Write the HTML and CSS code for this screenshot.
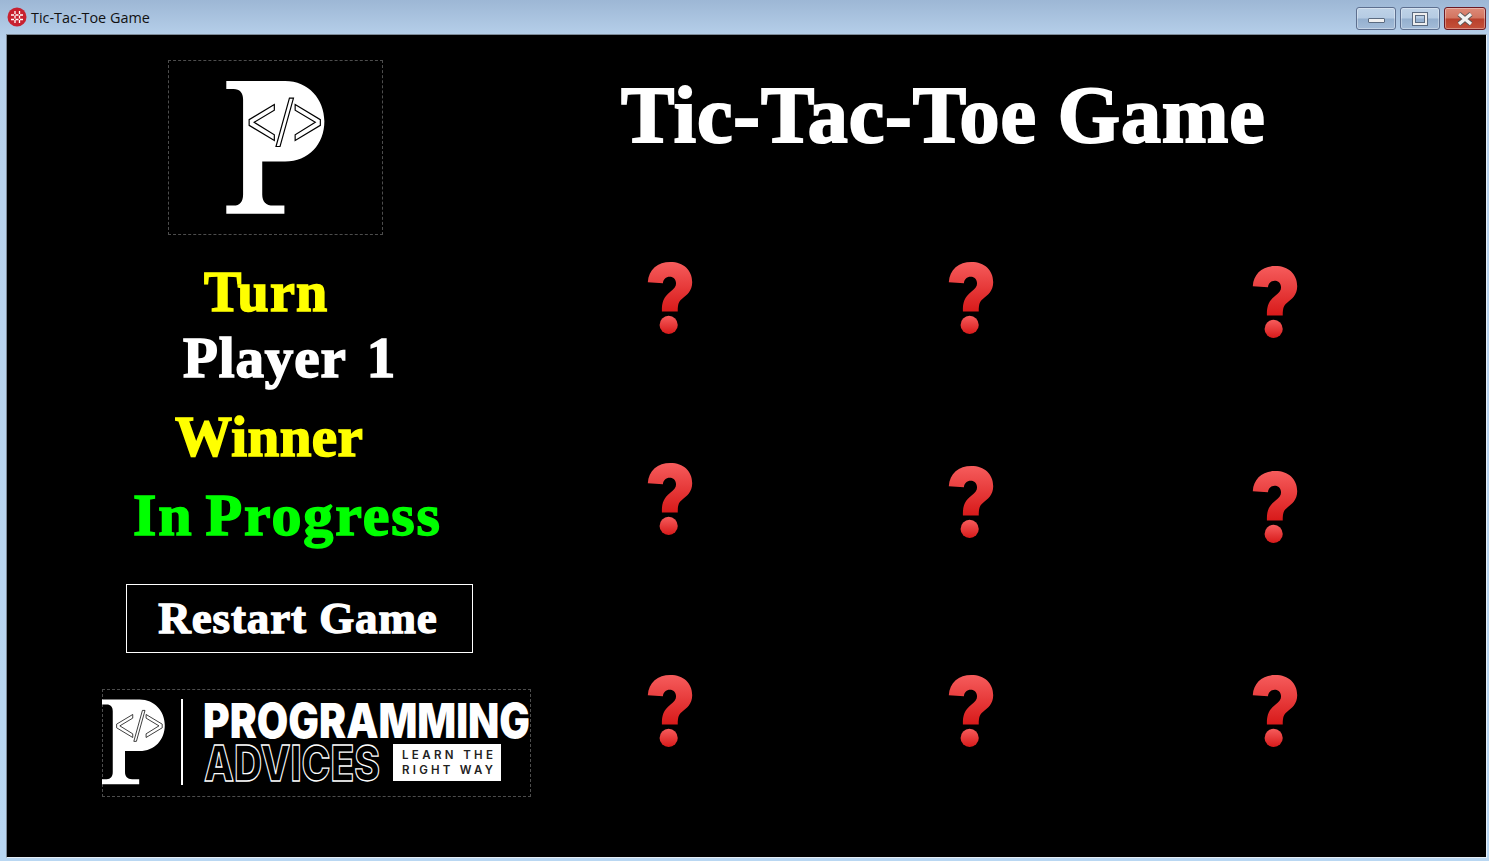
FILE: index.html
```html
<!DOCTYPE html>
<html lang="en">
<head>
  <meta charset="UTF-8">
  <title>Tic-Tac-Toe Game</title>
  <link rel="stylesheet" href="styles.css">
</head>
<body>

  <svg class="defs" width="0" height="0">
    <defs>
      <linearGradient id="qGrad" x1="0" y1="0" x2="0" y2="1">
        <stop offset="0" stop-color="#f65c5c"/>
        <stop offset="1" stop-color="#d81a1a"/>
      </linearGradient>
      <symbol id="question" viewBox="40 38 132 214">
        <path fill="url(#qGrad)" d="M40 98C42 60 70 38 107 38C146 38 172 62 172 98C172 124 156 136 142 147C132 155 129 162 129 185L82 185C81 158 87 142 106 127C118 118 124 112 124 102C124 90 116 82 105 82C94 82 86 90 85 101Z"/>
        <circle cx="102" cy="225" r="27" fill="url(#qGrad)"/>
      </symbol>
      <symbol id="pmark" viewBox="200 80 293 396">
        <path fill="#fff" d="M200 80H375C445 80 492 135 492 200C492 268 445 320 375 320H307V418C307 440 318 451 340 451H373V475H200V451H222C240 451 250 440 250 418V135C250 115 240 104 222 104H200Z"/>
        <g fill="#fff" stroke="#000" stroke-width="3.5">
          <path d="M343 150L268 195V212L343 257V240L283 203L343 167Z"/>
          <path d="M388 131H400L360 275H348Z"/>
          <path d="M405 150L480 195V212L405 257V240L465 203L405 167Z"/>
        </g>
      </symbol>
    </defs>
  </svg>

  <div class="window">
    <div class="titlebar">
      <svg class="app-icon" viewBox="0 0 20 20">
        <circle cx="10" cy="10" r="9.5" fill="#c8202f"/>
        <path d="M8 4V16M12.5 4V16M4 8H16M4 12.5H16" stroke="#fff" stroke-width="1.3" stroke-dasharray="3 1.5" fill="none"/>
      </svg>
      <span class="app-title">Tic-Tac-Toe Game</span>
      <div class="controls">
        <div class="ctl"><span class="ico-min"></span></div>
        <div class="ctl"><span class="ico-max"></span></div>
        <div class="ctl ctl-close">
          <svg viewBox="0 0 18 14" width="18" height="14">
            <path d="M3 2L15 12M15 2L3 12" stroke="#555" stroke-width="5"/>
            <path d="M3 2L15 12M15 2L3 12" stroke="#f2f2f2" stroke-width="3.4"/>
          </svg>
        </div>
      </div>
    </div>

    <div class="client">
      <div class="side">
        <div class="logo-box">
          <svg width="99" height="133"><use href="#pmark"/></svg>
        </div>
        <div class="lbl turn">Turn</div>
        <div class="lbl player">Player 1</div>
        <div class="lbl winner">Winner</div>
        <div class="lbl progress">In Progress</div>
        <button class="restart">Restart Game</button>
        <div class="brand">
          <svg width="427" height="106" viewBox="1 1 427 106">
            <use href="#pmark" x="0" y="10" width="63" height="86"/>
            <rect x="79" y="10" width="2" height="86" fill="#fff"/>
            <text class="w-prog" x="101" y="49" textLength="327" lengthAdjust="spacingAndGlyphs">PROGRAMMING</text>
            <text class="w-adv" x="102" y="92" textLength="176" lengthAdjust="spacingAndGlyphs">ADVICES</text>
            <rect x="291" y="55" width="108" height="37" fill="#fff"/>
            <text class="w-tag" x="300" y="70" textLength="91">LEARN THE</text>
            <text class="w-tag" x="300" y="85" textLength="91">RIGHT WAY</text>
          </svg>
        </div>
      </div>

      <div class="stage">
        <h1 class="heading">Tic-Tac-Toe Game</h1>
        <div class="board">
          <div class="cell"><svg class="q"><use href="#question"/></svg></div>
          <div class="cell"><svg class="q"><use href="#question"/></svg></div>
          <div class="cell drop-4"><svg class="q"><use href="#question"/></svg></div>
          <div class="cell"><svg class="q"><use href="#question"/></svg></div>
          <div class="cell drop-3"><svg class="q"><use href="#question"/></svg></div>
          <div class="cell drop-8"><svg class="q"><use href="#question"/></svg></div>
          <div class="cell"><svg class="q"><use href="#question"/></svg></div>
          <div class="cell"><svg class="q"><use href="#question"/></svg></div>
          <div class="cell"><svg class="q"><use href="#question"/></svg></div>
        </div>
      </div>
    </div>
  </div>

</body>
</html>
```

FILE: styles.css
```css
html, body {
  margin: 0;
  height: 100%;
  overflow: hidden;
}

.defs {
  display: block;
  height: 0;
}

.window {
  height: 861px;
  box-sizing: border-box;
  display: flex;
  flex-direction: column;
  background: linear-gradient(#9db7d5 0, #b9d2ec 40px, #b9d7f2 100%);
  padding: 0 2px 3px 6px;
}

.titlebar {
  height: 34px;
  flex: none;
  display: flex;
  align-items: center;
  margin-left: -6px;
  padding-left: 7px;
}

.app-icon {
  width: 20px;
  height: 20px;
  margin-right: 4px;
}

.app-title {
  font-family: "Open Sans", sans-serif;
  font-size: 14.4px;
  color: #111;
}

.controls {
  margin-left: auto;
  display: flex;
  gap: 4px;
  align-self: flex-start;
  margin-top: 7px;
  margin-right: 1px;
}

.ctl {
  width: 38px;
  height: 21px;
  border: 1px solid #5d6f8f;
  border-radius: 3px;
  background: linear-gradient(#bfd3e8 0, #b5cbe3 48%, #94afce 52%, #a3bcd8 100%);
  box-shadow: inset 0 0 0 1px rgba(255, 255, 255, 0.35);
  display: flex;
  align-items: center;
  justify-content: center;
}

.ctl-close {
  width: 40px;
  border-color: #6b1a24;
  background: linear-gradient(#dd8a78 0, #d27460 48%, #b9402c 52%, #c4513a 100%);
}

.ico-min {
  width: 15px;
  height: 3px;
  margin-top: 3px;
  background: #f0f0f0;
  border: 1px solid #5b6b80;
  border-radius: 1px;
}

.ico-max {
  width: 10px;
  height: 8px;
  border: 2px solid #eee;
  outline: 1px solid #5b6b80;
  box-shadow: inset 0 0 0 1px #5b6b80;
}

.client {
  flex: 1;
  display: flex;
  background: #000;
  border-top: 1px solid #7d8a98;
  border-left: 1px solid #7d8a98;
  border-right: 1px solid #e6eef6;
  border-bottom: 1px solid #e6eef6;
  font-family: "Liberation Serif", serif;
  font-weight: bold;
  color: #fff;
}

.side {
  width: 534px;
  flex: none;
  display: flex;
  flex-direction: column;
  align-items: flex-start;
}

.logo-box {
  width: 213px;
  height: 173px;
  margin: 25px 0 0 161px;
  border: 1px dashed #4d4d4d;
  display: flex;
  align-items: center;
  justify-content: center;
}

.lbl {
  line-height: 64px;
  white-space: nowrap;
  -webkit-text-stroke: 1.6px currentColor;
}

.turn {
  margin: 25px 0 0 197px;
  font-size: 56px;
  letter-spacing: 1.3px;
  color: #ff0;
}

.player {
  margin: 2px 0 0 176px;
  font-size: 57px;
  letter-spacing: 0.9px;
  word-spacing: 6px;
}

.winner {
  margin: 15px 0 0 168px;
  font-size: 57px;
  letter-spacing: 0.4px;
  color: #ff0;
}

.progress {
  margin: 14px 0 0 126px;
  font-size: 60px;
  letter-spacing: 1.9px;
  word-spacing: -5px;
  color: #0f0;
}

.restart {
  width: 347px;
  height: 69px;
  margin: 37px 0 0 119px;
  padding: 0 3px 2px 0;
  background: #000;
  border: 1px solid #fff;
  color: #fff;
  font: bold 45px "Liberation Serif", serif;
  letter-spacing: 0.9px;
  -webkit-text-stroke: 1.3px #fff;
}

.brand {
  width: 427px;
  height: 106px;
  margin: 36px 0 0 95px;
  border: 1px dashed #4d4d4d;
}

.brand svg {
  display: block;
  overflow: visible;
}

.w-prog {
  font: 900 48px "Inter", sans-serif;
  fill: #fff;
}

.w-adv {
  font: 800 50px "Inter", sans-serif;
  fill: #000;
  stroke: #fff;
  stroke-width: 1.3px;
}

.w-tag {
  font: 600 11.5px "Inter", sans-serif;
  fill: #222;
}

.stage {
  flex: 1;
}

.heading {
  margin: 34px 0 0 80px;
  font-size: 80px;
  line-height: 92px;
  letter-spacing: 0.9px;
  white-space: nowrap;
  -webkit-text-stroke: 2px #fff;
}

.board {
  display: grid;
  grid-template-columns: 301px 304px 1fr;
  grid-template-rows: 201px 212px 100px;
  margin: 101px 0 0 106px;
}

.q {
  display: block;
  width: 46px;
  height: 72px;
}

.drop-3 { margin-top: 3px; }
.drop-4 { margin-top: 4px; }
.drop-8 { margin-top: 8px; }
```
